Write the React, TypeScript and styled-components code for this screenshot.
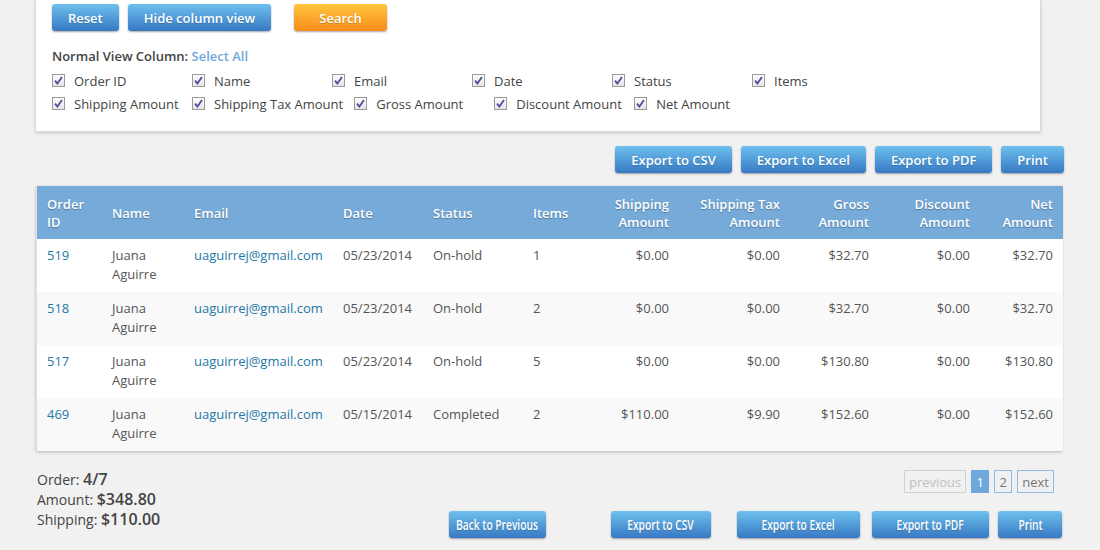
import React from "react";
import styled, { createGlobalStyle, css } from "styled-components";

const Global = createGlobalStyle`
  html, body { margin: 0; padding: 0; background: #f1f1f1; }
  body { font-family: "Open Sans", "Liberation Sans", sans-serif; color: #444; font-size: 13px; }
  * { box-sizing: border-box; }
`;

const Page = styled.div`
  width: 1100px;
  height: 550px;
  overflow: hidden;
  padding-left: 35px;
`;

const Main = styled.div`
  width: 1030px;
  display: flex;
  flex-direction: column;
`;

const Panel = styled.div`
  width: 1006px;
  background: #fff;
  border: 1px solid #dcdcdc;
  border-top: none;
  box-shadow: 0 1px 3px rgba(0, 0, 0, 0.18);
  padding: 4px 16px 16px;
`;

const ButtonRow = styled.div`
  display: flex;
  align-items: center;
`;

const Btn = styled.button<{ $orange?: boolean; $w?: number; $ml?: number }>`
  height: 27px;
  padding: 0 16px;
  border: none;
  border-radius: 3px;
  font-family: "Open Sans", "Liberation Sans", sans-serif;
  font-size: 13px;
  font-weight: 600;
  color: #fff;
  text-shadow: 0 1px 1px rgba(0, 0, 0, 0.2);
  background: linear-gradient(#6ec0ee, #3779c4);
  box-shadow: 0 1px 2px rgba(0, 0, 0, 0.35);
  white-space: nowrap;
  display: inline-flex;
  align-items: center;
  justify-content: center;
  flex: none;
  ${(p) => p.$w && css`width: ${p.$w}px; padding: 0;`}
  ${(p) => p.$ml !== undefined && css`margin-left: ${p.$ml}px;`}
  ${(p) =>
    p.$orange &&
    css`
      background: linear-gradient(#ffc53d, #f98c1c);
    `}
`;

const Narrow = styled.span`
  display: inline-block;
  font-size: 14px;
  transform: scaleX(0.73);
`;

const Title = styled.div`
  margin-top: 16px;
  font-size: 13px;
  line-height: 18px;
  font-weight: 600;
  color: #444;
`;

const SelectAll = styled.a`
  color: #6fa8dc;
  text-decoration: none;
`;

const Checks = styled.div`
  margin-top: 4px;
  display: flex;
  flex-wrap: wrap;
  width: 840px;
`;

const CheckItem = styled.label`
  display: flex;
  align-items: center;
  min-width: 140px;
  padding-right: 11px;
  height: 23px;
  font-size: 13px;
  color: #444;
`;

const Box = styled.span`
  width: 13px;
  height: 13px;
  border: 1px solid #9a9a9a;
  background: linear-gradient(#fdfdfd, #e6e6e6);
  margin-right: 9px;
  display: inline-flex;
  align-items: center;
  justify-content: center;
  flex: none;
`;

const RowBreak = styled.div`
  flex-basis: 100%;
  height: 0;
`;

const ExportRow = styled.div`
  display: flex;
  justify-content: flex-end;
  gap: 9px;
  margin-top: 14px;
  padding-right: 1px;
`;

const TableWrap = styled.div`
  margin-top: 13px;
  margin-left: 1px;
  width: 1026px;
  box-shadow: 0 1px 3px rgba(0, 0, 0, 0.25);
  border-left: 1px solid #e0e0e0;
`;

const Table = styled.table`
  width: 1026px;
  table-layout: fixed;
  border-collapse: collapse;
`;

const Th = styled.th<{ $right?: boolean }>`
  background: #75aad9;
  color: #fff;
  font-weight: 600;
  font-size: 13px;
  line-height: 18px;
  padding: 9px 10px 8px;
  height: 53px;
  text-align: ${(p) => (p.$right ? "right" : "left")};
  text-shadow: 0 1px 1px rgba(0, 0, 0, 0.3);
  vertical-align: middle;
`;

const Tr = styled.tr<{ $alt?: boolean }>`
  background: ${(p) => (p.$alt ? "#f9f9f9" : "#fff")};
`;

const Td = styled.td<{ $right?: boolean; $link?: boolean }>`
  font-size: 13px;
  line-height: 19px;
  padding: 7px 10px 8px;
  height: 53px;
  vertical-align: top;
  color: ${(p) => (p.$link ? "#2378a6" : "#555")};
  text-align: ${(p) => (p.$right ? "right" : "left")};
`;

const Footer = styled.div`
  display: flex;
  justify-content: space-between;
  margin-top: 18px;
`;

const Summary = styled.div`
  padding-left: 2px;
`;

const SumLine = styled.div`
  font-size: 14px;
  line-height: 20px;
  height: 20px;
  color: #444;
  b {
    font-size: 16px;
    font-weight: 600;
  }
`;

const RightCol = styled.div`
  display: flex;
  flex-direction: column;
  align-items: flex-end;
  padding-top: 1px;
`;

const Pager = styled.div`
  display: flex;
  gap: 5px;
  margin-right: 11px;
`;

const PageBtn = styled.span<{ $state: "disabled" | "active" | "normal" }>`
  height: 23px;
  padding: 0 4px;
  min-width: 18px;
  display: inline-flex;
  align-items: center;
  justify-content: center;
  font-size: 13px;
  border: 1px solid #8fbbe3;
  color: #777;
  ${(p) =>
    p.$state === "disabled" &&
    css`
      border-color: #d2d2d2;
      color: #c0c0c0;
    `}
  ${(p) =>
    p.$state === "active" &&
    css`
      background: #6fa8dc;
      border-color: #6fa8dc;
      color: #fff;
    `}
`;

const BottomRow = styled.div`
  display: flex;
  margin-top: 18px;
  margin-right: 3px;
`;

const Check = () => (
  <Box>
    <svg width="9" height="9" viewBox="0 0 9 9">
      <path d="M1 4.6 L3.4 7.5 L8 1" stroke="#4a4f9c" strokeWidth="1.8" fill="none" />
    </svg>
  </Box>
);

const row1 = ["Order ID", "Name", "Email", "Date", "Status", "Items"];
const row2 = ["Shipping Amount", "Shipping Tax Amount", "Gross Amount", "Discount Amount", "Net Amount"];

const cols: { label: string; w: number; right?: boolean }[] = [
  { label: "Order ID", w: 65 },
  { label: "Name", w: 82 },
  { label: "Email", w: 149 },
  { label: "Date", w: 90 },
  { label: "Status", w: 100 },
  { label: "Items", w: 76 },
  { label: "Shipping Amount", w: 80, right: true },
  { label: "Shipping Tax Amount", w: 111, right: true },
  { label: "Gross Amount", w: 89, right: true },
  { label: "Discount Amount", w: 101, right: true },
  { label: "Net Amount", w: 83, right: true },
];

const rows = [
  ["519", "05/23/2014", "On-hold", "1", "$0.00", "$0.00", "$32.70", "$0.00", "$32.70"],
  ["518", "05/23/2014", "On-hold", "2", "$0.00", "$0.00", "$32.70", "$0.00", "$32.70"],
  ["517", "05/23/2014", "On-hold", "5", "$0.00", "$0.00", "$130.80", "$0.00", "$130.80"],
  ["469", "05/15/2014", "Completed", "2", "$110.00", "$9.90", "$152.60", "$0.00", "$152.60"],
];

export default function App() {
  return (
    <Page>
      <Global />
      <Main>
        <Panel>
          <ButtonRow>
            <Btn>Reset</Btn>
            <Btn $ml={9}>Hide column view</Btn>
            <Btn $orange $w={93} $ml={23}>Search</Btn>
          </ButtonRow>
          <Title>
            Normal View Column: <SelectAll>Select All</SelectAll>
          </Title>
          <Checks>
            {row1.map((t) => (
              <CheckItem key={t}>
                <Check />
                {t}
              </CheckItem>
            ))}
            <RowBreak />
            {row2.map((t) => (
              <CheckItem key={t}>
                <Check />
                {t}
              </CheckItem>
            ))}
          </Checks>
        </Panel>

        <ExportRow>
          <Btn>Export to CSV</Btn>
          <Btn>Export to Excel</Btn>
          <Btn>Export to PDF</Btn>
          <Btn>Print</Btn>
        </ExportRow>

        <TableWrap>
          <Table>
            <colgroup>
              {cols.map((c, i) => (
                <col key={i} style={{ width: c.w }} />
              ))}
            </colgroup>
            <thead>
              <tr>
                {cols.map((c, i) => (
                  <Th key={i} $right={c.right}>
                    {c.label}
                  </Th>
                ))}
              </tr>
            </thead>
            <tbody>
              {rows.map((r, i) => (
                <Tr key={r[0]} $alt={i % 2 === 1}>
                  <Td $link>{r[0]}</Td>
                  <Td>Juana Aguirre</Td>
                  <Td $link>uaguirrej@gmail.com</Td>
                  <Td>{r[1]}</Td>
                  <Td>{r[2]}</Td>
                  <Td>{r[3]}</Td>
                  <Td $right>{r[4]}</Td>
                  <Td $right>{r[5]}</Td>
                  <Td $right>{r[6]}</Td>
                  <Td $right>{r[7]}</Td>
                  <Td $right>{r[8]}</Td>
                </Tr>
              ))}
            </tbody>
          </Table>
        </TableWrap>

        <Footer>
          <Summary>
            <SumLine>
              Order: <b>4/7</b>
            </SumLine>
            <SumLine>
              Amount: <b>$348.80</b>
            </SumLine>
            <SumLine>
              Shipping: <b>$110.00</b>
            </SumLine>
          </Summary>
          <RightCol>
            <Pager>
              <PageBtn $state="disabled">previous</PageBtn>
              <PageBtn $state="active">1</PageBtn>
              <PageBtn $state="normal">2</PageBtn>
              <PageBtn $state="normal">next</PageBtn>
            </Pager>
            <BottomRow>
              <Btn $w={97}><Narrow>Back to Previous</Narrow></Btn>
              <Btn $w={100} $ml={65}><Narrow>Export to CSV</Narrow></Btn>
              <Btn $w={123} $ml={26}><Narrow>Export to Excel</Narrow></Btn>
              <Btn $w={117} $ml={12}><Narrow>Export to PDF</Narrow></Btn>
              <Btn $w={64} $ml={9}><Narrow>Print</Narrow></Btn>
            </BottomRow>
          </RightCol>
        </Footer>
      </Main>
    </Page>
  );
}
